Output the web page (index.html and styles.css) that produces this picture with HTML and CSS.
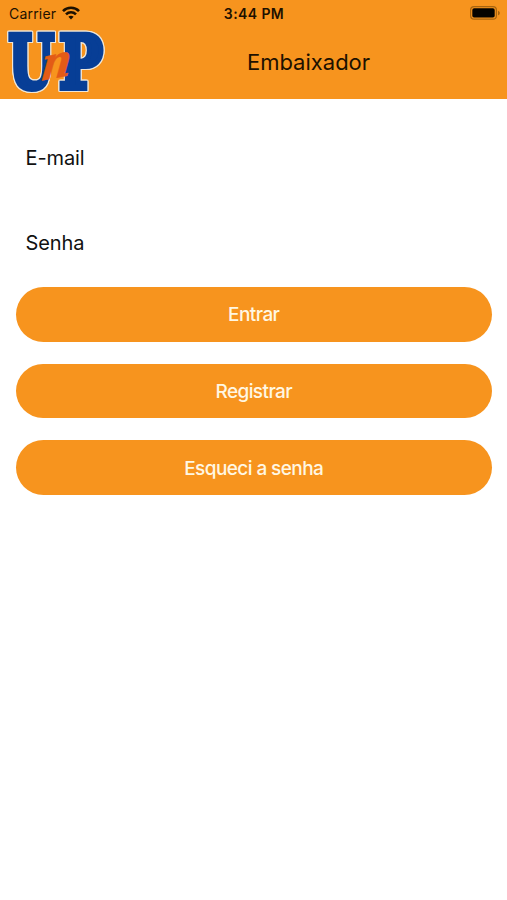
FILE: index.html
```html
<!DOCTYPE html>
<html lang="pt-BR">
<head>
<meta charset="utf-8">
<meta name="viewport" content="width=device-width, initial-scale=1">
<title>Embaixador</title>
<link rel="stylesheet" href="styles.css">
</head>
<body>
<header class="header">
  <div class="status">
    <div class="carrier"><span>Carrier</span>
      <svg class="wifi" width="18" height="14" viewBox="0 0 18 14" fill="none" stroke="#1d1100" stroke-width="2.6"><path d="M1 5.1C5.3.6 12.7.6 17 5.1"/><path d="M4 8.3c2.8-2.8 7.2-2.8 10 0"/><path d="M6.4 10.7c1.5-1.4 3.7-1.4 5.2 0L9 13.4z" fill="#1d1100" stroke="none"/></svg>
    </div>
    <time class="time">3:44 PM</time>
    <svg class="battery" width="31" height="14" viewBox="0 0 31 14"><rect x=".6" y=".6" width="25.8" height="12.6" rx="3.5" fill="none" stroke="#a8640f" stroke-width="1.2"/><rect x="2.3" y="2.3" width="22.4" height="9.2" rx="1.8" fill="#050300"/><path d="M28 4.7c2.4.8 2.4 3.8 0 4.6z" fill="#a8640f"/></svg>
  </div>
  <div class="bar">
    <svg class="logo" width="104" height="66" viewBox="4 29 104 66" role="img" aria-label="UnP">
      <g class="logo-letters">
        <text transform="translate(8.8 88) scale(.72 1)">U</text>
        <text transform="translate(59.3 88) scale(.8 1)">P</text>
      </g>
      <text class="logo-n" transform="translate(39.5 81) skewX(-6) skewY(-11) scale(.9 1)">n</text>
    </svg>
    <h1 class="title">Embaixador</h1>
  </div>
</header>
<main class="form">
  <label class="field email">E-mail</label>
  <label class="field senha">Senha</label>
  <div class="actions">
    <button class="button entrar">Entrar</button>
    <button class="button registrar">Registrar</button>
    <button class="button esqueci">Esqueci a senha</button>
  </div>
</main>
</body>
</html>
```
FILE: styles.css
```css
* { box-sizing: border-box; }
body { margin: 0; background: #fff; color: #111; font-family: Inter, sans-serif; }
.header { height: 98.5px; background: #f7941e; }
.status { height: 28px; display: grid; grid-template-columns: 1fr auto 1fr; align-items: center; padding: 0 6px 0 9px; color: #1d1100; }
.carrier { display: flex; align-items: center; gap: 6px; font-size: 14px; letter-spacing: .2px; }
.carrier span, .time { position: relative; top: -1px; }
.wifi { margin-top: -3px; }
.time { left: -1px; font-size: 14px; font-weight: 600; letter-spacing: .4px; }
.battery { justify-self: end; margin-top: -2px; }
.bar { height: 70px; display: flex; align-items: center; padding-left: 4px; }
.logo { flex: none; margin-top: -2px; overflow: visible; }
.logo text { font-family: "DejaVu Serif", serif; font-weight: bold; line-height: 1; }
.logo-letters { font-size: 72px; stroke-linejoin: miter; fill: #073e96; stroke: #073e96; stroke-width: 6px; filter: drop-shadow(1px 0 0 #efe6d6) drop-shadow(-1px 0 0 #efe6d6) drop-shadow(0 1px 0 #efe6d6) drop-shadow(0 -1px 0 #efe6d6); }
.logo-n { font-size: 46px; font-style: italic; fill: #e35b16; stroke: #e35b16; stroke-width: .5px; }
.title { flex: 1; margin: 0; padding: 0 0 2px 2px; text-align: center; font-size: 22px; line-height: 28px; font-weight: 400; color: #1d1100; }
.form { padding: 46px 15px 0 15.5px; }
.field { display: block; height: 26px; padding-left: 10px; font-size: 20px; line-height: 26px; letter-spacing: -.1px; }
.senha { margin-top: 59px; }
.actions { display: flex; flex-direction: column; gap: 22px; margin-top: 31.5px; }
.button { height: 54.7px; border: 0; border-radius: 28px; background: #f7941e; color: #fff7e3; font: 500 19px Inter, sans-serif; letter-spacing: -.58px; padding: 1px 0 0; }
```
